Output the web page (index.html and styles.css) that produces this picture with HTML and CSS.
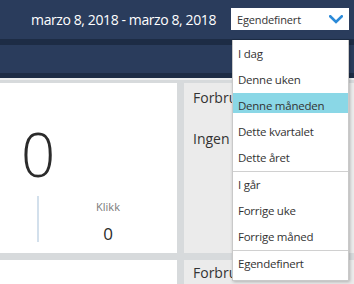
FILE: index.html
```html
<!DOCTYPE html>
<html lang="no">
<head>
<meta charset="utf-8">
<title>Oversikt</title>
<link rel="stylesheet" href="styles.css">
</head>
<body>
  <header class="topbar">
    <span class="date-range">marzo 8, 2018 - marzo 8, 2018</span>
    <div class="select">
      <span class="select-label">Egendefinert</span>
      <svg class="chevron" width="14" height="9" viewBox="0 0 14 9" aria-hidden="true">
        <path d="M1.2 1.3 L7 7 L12.8 1.3" fill="none" stroke="#2b8ad8" stroke-width="2.6" stroke-linecap="square"/>
      </svg>
    </div>
  </header>
  <div class="strip"></div>
  <nav class="subbar"></nav>
  <div class="strip strip--bottom"></div>

  <main class="grid">
    <section class="card card--summary">
      <div class="big-number">0</div>
      <div class="metrics">
        <div class="divider"></div>
        <div class="metric">
          <div class="metric-label">Klikk</div>
          <div class="metric-value">0</div>
        </div>
      </div>
    </section>
    <section class="card card--alt">
      <div class="card-title">Forbruk</div>
      <div class="card-empty">Ingen data</div>
    </section>
    <section class="card"></section>
    <section class="card card--alt">
      <div class="card-title card-title--second">Forbruk</div>
    </section>
  </main>

  <div class="dropdown">
    <ul class="dd-group">
      <li class="dd-item">I dag</li>
      <li class="dd-item">Denne uken</li>
      <li class="dd-item dd-item--active">Denne måneden</li>
      <li class="dd-item">Dette kvartalet</li>
      <li class="dd-item">Dette året</li>
    </ul>
    <ul class="dd-group">
      <li class="dd-item">I går</li>
      <li class="dd-item">Forrige uke</li>
      <li class="dd-item">Forrige måned</li>
    </ul>
    <ul class="dd-group dd-group--last">
      <li class="dd-item">Egendefinert</li>
    </ul>
  </div>
</body>
</html>
```

FILE: styles.css
```css
* { box-sizing: border-box; }

html, body {
  margin: 0;
  padding: 0;
}

body {
  width: 354px;
  height: 284px;
  overflow: hidden;
  background: #d7dadc;
  font-family: "Open Sans", "Noto Sans", sans-serif;
  color: #333;
  position: relative;
}

.topbar {
  height: 39px;
  background: #2a3c5c;
  display: flex;
  justify-content: flex-end;
  align-items: flex-start;
  padding: 8px 5px 0 0;
}

.date-range {
  color: #fff;
  font-size: 14px;
  line-height: 22px;
  margin: 1px 15px 0 0;
  letter-spacing: -0.4px;
}

.select {
  width: 118px;
  height: 22px;
  background: #fff;
  display: flex;
  align-items: center;
  justify-content: space-between;
  padding: 0 6px 0 6px;
}

.select-label {
  font-size: 11px;
  color: #333;
  letter-spacing: -0.15px;
}

.chevron { display: block; }

.strip {
  height: 6px;
  background: #1d2c45;
}

.strip--bottom {
  border-bottom: 2px solid #eceeef;
  height: 7px;
}

.subbar {
  height: 28px;
  background: #2a3c5c;
}

.grid {
  display: grid;
  grid-template-columns: 177px 1fr;
  grid-template-rows: 170px 170px;
  gap: 7px;
  padding-top: 3px;
}

.card {
  background: #fff;
}

.card--alt {
  background: #ebebeb;
  padding: 5px 0 0 9px;
  white-space: nowrap;
  overflow: hidden;
}

.card--summary {
  padding-top: 41px;
}

.big-number {
  width: 76px;
  text-align: center;
  font-size: 60px;
  line-height: 60px;
  font-weight: 300;
  color: #2b2b2b;
}

.metrics {
  display: flex;
  height: 46px;
  margin-top: 12px;
}

.divider {
  margin-left: 37px;
  width: 2px;
  background: #d3e0ec;
}

.metric {
  flex: 1;
  text-align: center;
  padding-top: 3px;
}

.metric-label {
  font-size: 11px;
  line-height: 16px;
  color: #7a7a7a;
}

.metric-value {
  margin-top: 9px;
  font-size: 17px;
  line-height: 20px;
  color: #2b2b2b;
}

.card-title {
  font-size: 14px;
  line-height: 20px;
  color: #333;
}

.card-title--second {
  margin-top: -2px;
}

.card-empty {
  margin-top: 21px;
  font-size: 14px;
  line-height: 20px;
  color: #333;
}

.dropdown {
  position: absolute;
  top: 40px;
  left: 232px;
  width: 117px;
  background: #fff;
  border: 1px solid #c9c9c9;
  border-top: none;
  box-shadow: 1px 1px 3px rgba(0, 0, 0, 0.25);
  padding-top: 1px;
}

.dd-group {
  list-style: none;
  margin: 0;
  padding: 0;
  border-bottom: 1px solid #d0d0d0;
}

.dd-group--last {
  border-bottom: none;
  padding-bottom: 3px;
}

.dd-item {
  height: 26px;
  line-height: 26px;
  padding-left: 5px;
  font-size: 11.5px;
  color: #333;
  letter-spacing: -0.25px;
}

.dd-item--active {
  background: linear-gradient(#8ad7e6, #8ad7e6) 0 0 / 100% 20px no-repeat;
}
```
